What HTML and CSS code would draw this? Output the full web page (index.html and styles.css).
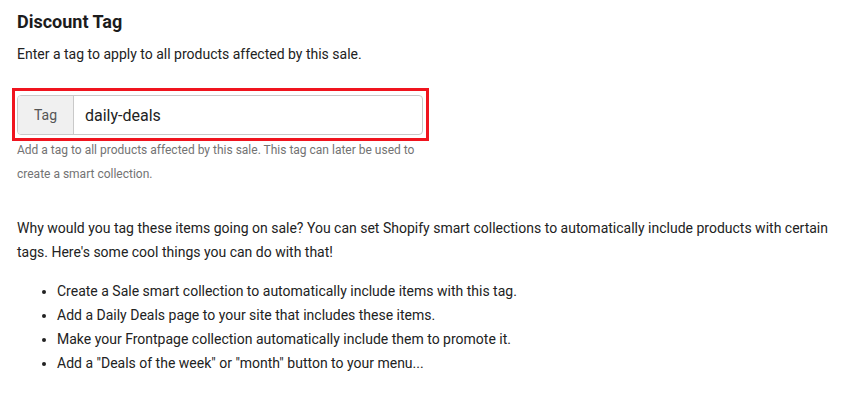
FILE: index.html
```html
<!DOCTYPE html>
<html lang="en">
<head>
<meta charset="utf-8">
<title>Discount Tag</title>
<link rel="stylesheet" href="styles.css">
</head>
<body>
<main class="page">
  <h2 class="title">Discount Tag</h2>
  <p class="subtitle">Enter a tag to apply to all products affected by this sale.</p>
  <div class="field">
    <div class="input-group">
      <span class="addon">Tag</span>
      <span class="value">daily-deals</span>
    </div>
    <p class="help">Add a tag to all products affected by this sale. This tag can later be used to create a smart collection.</p>
  </div>
  <p class="body-text">Why would you tag these items going on sale? You can set Shopify smart collections to automatically include products with certain tags. Here's some cool things you can do with that!</p>
  <ul class="ideas">
    <li>Create a Sale smart collection to automatically include items with this tag.</li>
    <li>Add a Daily Deals page to your site that includes these items.</li>
    <li>Make your Frontpage collection automatically include them to promote it.</li>
    <li>Add a "Deals of the week" or "month" button to your menu...</li>
  </ul>
</main>
</body>
</html>
```
FILE: styles.css
```css
html, body {
  margin: 0;
  padding: 0;
  background: #ffffff;
}

body {
  font-family: Roboto, "Liberation Sans", Arial, sans-serif;
  color: #222222;
}

.page {
  padding: 10px 17px 0 17px;
}

.title {
  margin: 0;
  font-size: 18px;
  line-height: 24px;
  font-weight: 700;
  color: #1c1c1c;
}

.subtitle {
  margin: 8px 0 0;
  font-size: 14px;
  line-height: 24px;
}

.field {
  margin-top: 29px;
  width: 406px;
}

.input-group {
  position: relative;
  display: flex;
  height: 40px;
  box-sizing: border-box;
  border: 1px solid #c9c9c9;
  border-radius: 4px;
  background: #ffffff;
}

.input-group::after {
  content: "";
  position: absolute;
  top: -8px;
  left: -6px;
  right: -7px;
  bottom: -7px;
  border: 3px solid #f0141e;
  pointer-events: none;
}

.addon {
  display: flex;
  align-items: center;
  justify-content: center;
  width: 55px;
  background: #f0f0f0;
  border-right: 1px solid #c9c9c9;
  border-radius: 3px 0 0 3px;
  font-size: 14px;
  color: #555555;
}

.value {
  display: flex;
  align-items: center;
  padding-left: 11px;
  font-size: 16px;
  color: #222222;
}

.help {
  margin: 3px 0 0;
  font-size: 12px;
  line-height: 24px;
  color: #737373;
}

.body-text {
  margin: 30px 0 0;
  font-size: 14px;
  line-height: 24px;
}

.ideas {
  margin: 15px 0 0;
  padding-left: 40px;
  font-size: 14px;
  line-height: 24px;
}
```
